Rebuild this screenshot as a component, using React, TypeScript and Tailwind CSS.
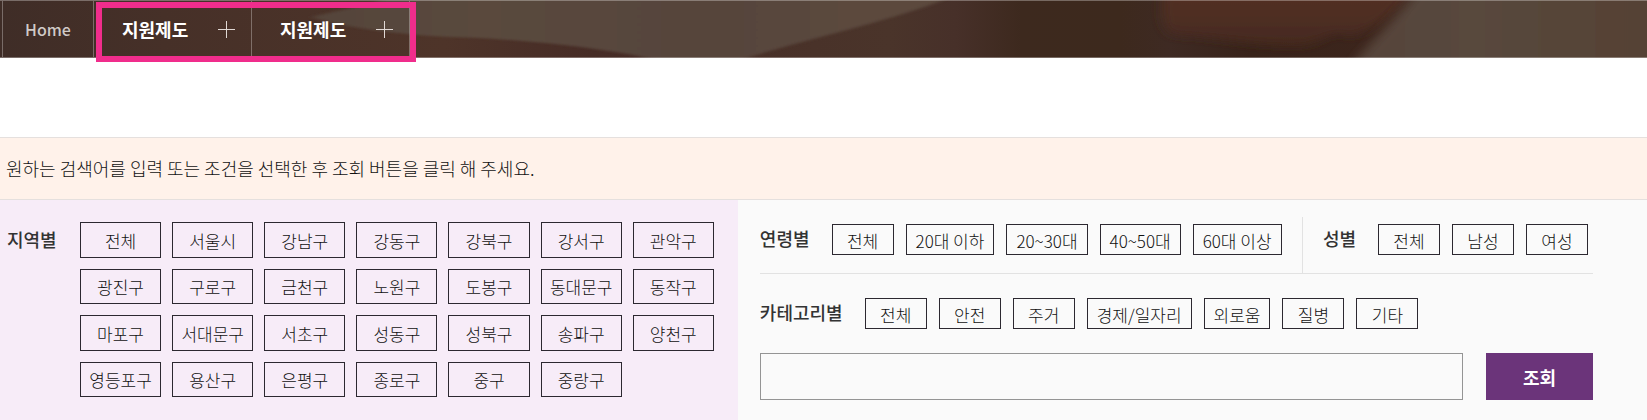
import { useState } from "react";
import clsx from "clsx";

const regions = [
  "전체", "서울시", "강남구", "강동구", "강북구", "강서구", "관악구",
  "광진구", "구로구", "금천구", "노원구", "도봉구", "동대문구", "동작구",
  "마포구", "서대문구", "서초구", "성동구", "성북구", "송파구", "양천구",
  "영등포구", "용산구", "은평구", "종로구", "중구", "중랑구",
];
const ages = ["전체", "20대 이하", "20~30대", "40~50대", "60대 이상"];
const genders = ["전체", "남성", "여성"];
const categories = ["전체", "안전", "주거", "경제/일자리", "외로움", "질병", "기타"];

function HeroPhoto() {
  return (
    <svg
      className="absolute inset-0 w-full h-full"
      viewBox="0 0 1647 58"
      preserveAspectRatio="none"
      aria-hidden="true"
    >
      <defs>
        <linearGradient id="base" x1="0" x2="1">
          <stop offset="0" stopColor="#3f2d27" />
          <stop offset="0.1" stopColor="#463028" />
          <stop offset="0.27" stopColor="#4e3429" />
          <stop offset="0.36" stopColor="#462c26" />
          <stop offset="0.54" stopColor="#4a342a" />
          <stop offset="0.58" stopColor="#473029" />
          <stop offset="0.62" stopColor="#3d291e" />
          <stop offset="0.68" stopColor="#3d291d" />
          <stop offset="0.71" stopColor="#3e2a23" />
          <stop offset="0.76" stopColor="#38231a" />
          <stop offset="0.83" stopColor="#3c251c" />
        </linearGradient>
        <linearGradient id="cloth" x1="0" x2="1">
          <stop offset="0" stopColor="#54443a" />
          <stop offset="0.25" stopColor="#5a493e" />
          <stop offset="0.6" stopColor="#56443b" />
          <stop offset="0.8" stopColor="#5b493e" />
          <stop offset="1" stopColor="#5b493e" />
        </linearGradient>
        <linearGradient id="wall" x1="0" x2="1">
          <stop offset="0" stopColor="#55433a" />
          <stop offset="0.35" stopColor="#58483d" />
          <stop offset="1" stopColor="#543f30" />
        </linearGradient>
        <linearGradient id="hand" x1="0" x2="0" y1="0" y2="1">
          <stop offset="0" stopColor="#552f25" />
          <stop offset="0.6" stopColor="#4f2f24" />
          <stop offset="1" stopColor="#44281e" />
        </linearGradient>
        <filter id="soft" x="-20%" y="-100%" width="140%" height="300%">
          <feGaussianBlur stdDeviation="3 1" />
        </filter>
        <filter id="softer" x="-20%" y="-100%" width="140%" height="300%">
          <feGaussianBlur stdDeviation="6 4" />
        </filter>
      </defs>
      <rect width="1647" height="58" fill="url(#base)" />
      <path
        d="M312 17C340 9 380 6 430 -20H985L938 2C880 24 800 40 735 62H665C620 50 530 39 451 37C400 35 335 26 312 17Z"
        fill="url(#cloth)"
        filter="url(#soft)"
      />
      <path
        d="M1166 -30H1430C1400 10 1375 30 1352 36C1320 28 1330 46 1290 46C1240 44 1215 37 1172 35C1160 28 1160 10 1166 -30Z"
        fill="url(#hand)"
        filter="url(#softer)"
      />
      <path
        d="M1432 -30H1720V90H1338C1356 50 1390 30 1432 -30Z"
        fill="url(#wall)"
        filter="url(#softer)"
      />
    </svg>
  );
}

function NavItem({ label }: { label: string }) {
  return (
    <button
      type="button"
      className="w-[158px] pl-7 pr-4 flex items-center justify-between border-r border-white/30 text-lg font-bold text-white"
    >
      {label}
      <svg width="17" height="17" viewBox="0 0 17 17" stroke="#e0d8d4" aria-hidden="true">
        <path d="M8.5 0V17M0 8.5H17" />
      </svg>
    </button>
  );
}

type ChipProps = {
  label: string;
  active: boolean;
  onClick: () => void;
  className?: string;
};

function Chip({ label, active, onClick, className }: ChipProps) {
  return (
    <button
      type="button"
      aria-pressed={active}
      onClick={onClick}
      className={clsx(
        "pt-px flex items-center justify-center border border-[#2c2830] text-[17px] leading-none font-light whitespace-nowrap",
        active ? "bg-[#6b347a] text-white" : "text-[#111]",
        className
      )}
    >
      {label}
    </button>
  );
}

function ChipGroup({ id, title, items }: { id: string; title: string; items: string[] }) {
  const [selected, setSelected] = useState("");

  return (
    <div role="group" aria-labelledby={id} className="flex items-start">
      <h2 id={id} className="mr-[22px] text-lg leading-7 font-medium text-[#333] whitespace-nowrap">
        {title}
      </h2>
      <div className="flex gap-3">
        {items.map((item) => (
          <Chip
            key={item}
            label={item}
            active={selected === item}
            onClick={() => setSelected(item)}
            className="h-[31px] min-w-[62px] px-[9px]"
          />
        ))}
      </div>
    </div>
  );
}

export default function App() {
  const [region, setRegion] = useState("");

  return (
    <div className="bg-white font-['Noto_Sans_CJK_KR',sans-serif]">
      {/* Breadcrumb over the hero photo */}
      <header className="relative h-[58px]">
        <HeroPhoto />
        <nav className="relative h-full pl-[2px] flex border-y border-white/30">
          <a
            href="#"
            className="w-[92px] flex items-center justify-center border-x border-white/30 text-base font-medium text-[#d0cac7]"
          >
            Home
          </a>
          <div className="relative flex">
            <NavItem label="지원제도" />
            <NavItem label="지원제도" />
            <span className="absolute left-[2px] -right-[6px] top-px -bottom-[5px] border-[6px] border-[#f02d8c] pointer-events-none" />
          </div>
        </nav>
      </header>

      <main className="pt-[79px]">
        <p className="pl-[6px] py-4 border-y border-[#e5e0de] bg-[#fff2ea] text-lg leading-[29px] font-light text-[#111]">
          원하는 검색어를 입력 또는 조건을 선택한 후 조회 버튼을 클릭 해 주세요.
        </p>

        <form className="grid grid-cols-[44.8%_1fr]" onSubmit={(e) => e.preventDefault()}>
          {/* Region */}
          <section className="pl-[7px] pr-6 pt-[22px] pb-[23px] flex bg-[#f7ecf8]">
            <h2
              id="region"
              className="w-[73px] shrink-0 pt-[3px] text-lg leading-7 font-medium text-[#333]"
            >
              지역별
            </h2>
            <div
              role="group"
              aria-labelledby="region"
              className="flex-1 h-[175px] grid grid-cols-7 grid-rows-4 gap-[11px]"
            >
              {regions.map((item) => (
                <Chip
                  key={item}
                  label={item}
                  active={region === item}
                  onClick={() => setRegion(item)}
                />
              ))}
            </div>
          </section>

          {/* Age, gender, category and keyword */}
          <section className="pl-[22px] pr-[54px] pt-[17px] pb-5 bg-[#fafafa]">
            <div className="h-[57px] flex justify-between border-b border-[#e2e2e2]">
              <div className="pt-[7px] pr-5 border-r border-[#e2e2e2]">
                <ChipGroup id="age" title="연령별" items={ages} />
              </div>
              <div className="pt-[7px] pr-[5px]">
                <ChipGroup id="gender" title="성별" items={genders} />
              </div>
            </div>
            <div className="pt-6">
              <ChipGroup id="category" title="카테고리별" items={categories} />
            </div>
            <div className="mt-6 flex gap-[23px]">
              <input
                type="text"
                aria-label="검색어"
                className="flex-1 min-w-0 h-[47px] px-3 border border-[#949494] text-[17px]"
              />
              <button type="submit" className="w-[107px] h-[47px] bg-[#6b347a] text-lg font-bold text-white">
                조회
              </button>
            </div>
          </section>
        </form>
      </main>
    </div>
  );
}
